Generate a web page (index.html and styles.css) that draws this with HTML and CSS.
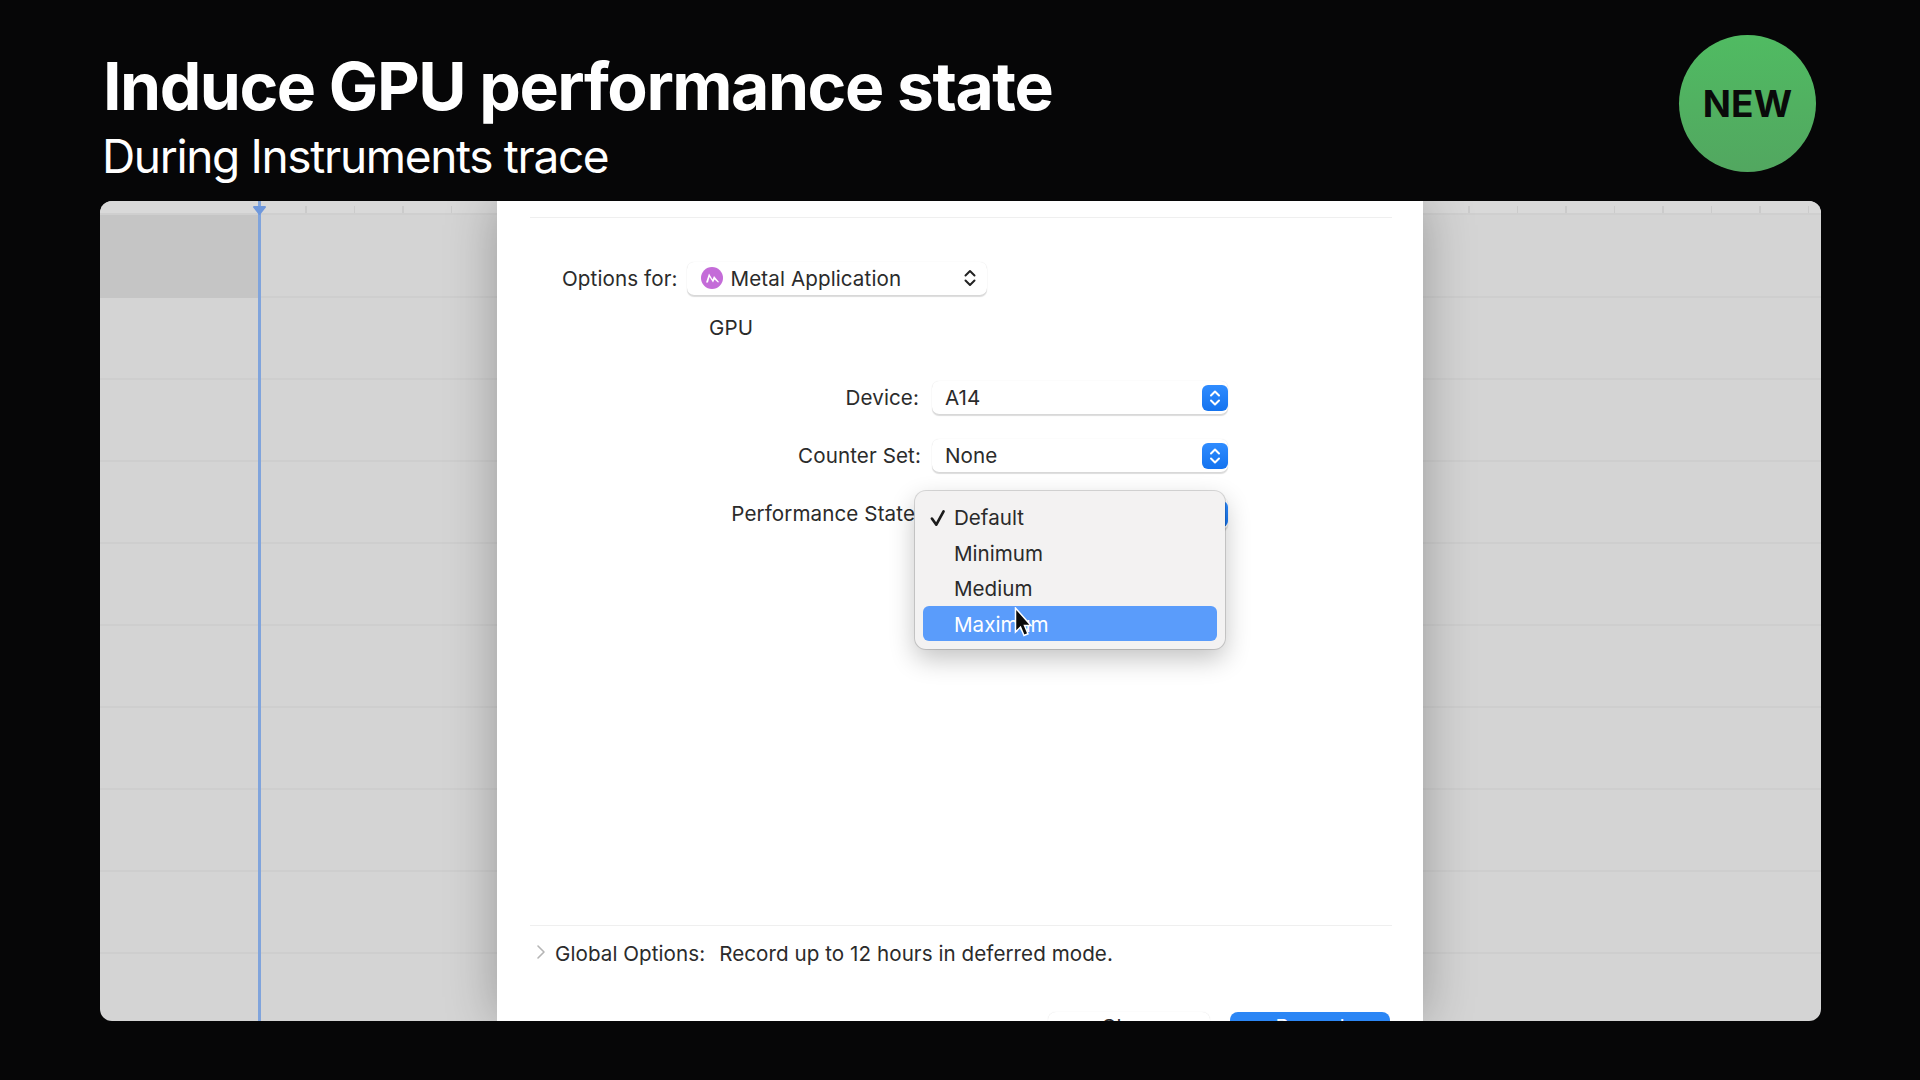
FILE: index.html
```html
<!DOCTYPE html>
<html lang="en">
<head>
<meta charset="utf-8">
<title>Induce GPU performance state</title>
<link rel="stylesheet" href="styles.css">
</head>
<body>
<main class="slide">
  <header class="head">
    <div class="titles">
      <h1 class="title">Induce GPU performance state</h1>
      <p class="subtitle">During Instruments trace</p>
    </div>
    <div class="badge">NEW</div>
  </header>

  <section class="panel">
    <div class="pane pane-left">
      <div class="ruler"></div>
      <div class="row row-head"><div class="row-label"></div></div>
      <div class="row"></div><div class="row"></div><div class="row"></div><div class="row"></div>
      <div class="row"></div><div class="row"></div><div class="row"></div><div class="row"></div>
      <div class="playhead">
        <svg class="playhead-cap" width="13" height="9" viewBox="0 0 13 9"><path d="M1 0h11a1 1 0 0 1 .8 1.600L7.300 8.400a1 1 0 0 1-1.600 0L.2 1.600A1 1 0 0 1 1 0z" fill="#6f98dc"/></svg>
      </div>
    </div>

    <div class="dialog">
      <hr class="rule rule-top">
      <div class="options">
        <span class="options-label">Options for:</span>
        <div class="select select-template">
          <svg class="metal" width="22" height="22" viewBox="0 0 22 22"><circle cx="11" cy="11" r="11" fill="#c46cd8"/><path d="M5 15.500 8 6.500l3.500 6 1.500-3.500 5 6-1 .5-3.500-3-1.500 3-3.500-5.500-1.500 5.500z" fill="#fff"/></svg>
          <span class="select-text">Metal Application</span>
          <svg class="chev" width="14" height="20" viewBox="0 0 14 20"><path d="M2.500 7.500 7 3l4.500 4.500M2.500 12.500 7 17l4.500-4.500" fill="none" stroke="#222" stroke-width="2" stroke-linecap="round" stroke-linejoin="round"/></svg>
        </div>
      </div>
      <div class="section-name">GPU</div>

      <div class="fields">
        <div class="field">
          <span class="field-label">Device:</span>
          <div class="select select-field">
            <span class="select-text">A14</span>
            <span class="stepper"><svg width="14" height="20" viewBox="0 0 14 20"><path d="M3 7.500 7 3.500l4 4M3 12.500l4 4 4-4" fill="none" stroke="#fff" stroke-width="2" stroke-linecap="round" stroke-linejoin="round"/></svg></span>
          </div>
        </div>
        <div class="field field-counter">
          <span class="field-label">Counter Set:</span>
          <div class="select select-field">
            <span class="select-text">None</span>
            <span class="stepper"><svg width="14" height="20" viewBox="0 0 14 20"><path d="M3 7.500 7 3.500l4 4M3 12.500l4 4 4-4" fill="none" stroke="#fff" stroke-width="2" stroke-linecap="round" stroke-linejoin="round"/></svg></span>
          </div>
        </div>
        <div class="field field-state">
          <span class="field-label">Performance State</span>
          <div class="select select-field">
            <span class="select-text"></span>
            <span class="stepper"></span>
          </div>
          <ul class="menu">
            <li class="menu-item"><svg class="check" width="20" height="20" viewBox="0 0 18 18"><path d="M3.500 9.500 7.500 15 14 3" fill="none" stroke="#1c1c1c" stroke-width="2.400" stroke-linecap="round" stroke-linejoin="round"/></svg>Default</li>
            <li class="menu-item">Minimum</li>
            <li class="menu-item">Medium</li>
            <li class="menu-item is-active">Maximum</li>
          </ul>
          <svg class="cursor" width="20" height="34" viewBox="0 0 20 34"><path d="M1.500 1v24l5-5 3.500 8.500 4-1.700-3.500-8.300h6.500z" fill="#0b0b0b" stroke="#fff" stroke-width="1.500"/></svg>
        </div>
      </div>

      <div class="spacer"></div>
      <hr class="rule">
      <div class="global">
        <svg class="disclosure" width="10" height="16" viewBox="0 0 10 16"><path d="M2 2l6 6-6 6" fill="none" stroke="#b5b5b5" stroke-width="1.600" stroke-linecap="round" stroke-linejoin="round"/></svg>
        <span>Global Options:</span>
        <span class="global-value">Record up to 12 hours in deferred mode.</span>
      </div>
      <div class="actions">
        <button class="btn btn-plain">Close</button>
        <button class="btn btn-primary">Record</button>
      </div>
    </div>

    <div class="pane pane-right">
      <div class="ruler"></div>
      <div class="row row-head"></div><div class="row"></div><div class="row"></div><div class="row"></div>
      <div class="row"></div><div class="row"></div><div class="row"></div><div class="row"></div><div class="row"></div>
    </div>
  </section>
</main>
</body>
</html>
```
FILE: styles.css
```css
* { box-sizing: border-box; }
html, body { margin: 0; height: 100%; background: #060607; }
body { font-family: Inter, "Liberation Sans", sans-serif; overflow: hidden; }

.slide { width: 1920px; height: 1080px; padding: 0 99px 59px 100px; display: flex; flex-direction: column; }

.head { height: 201px; flex: none; display: flex; justify-content: space-between; position: relative; }
.titles { padding: 49px 0 0 3px; color: #fff; }
.title { margin: 0; font-size: 66px; line-height: 74px; font-weight: 700; letter-spacing: -1.460px; }
.subtitle { margin: 7px 0 0 -1px; font-size: 46px; line-height: 52px; font-weight: 400; letter-spacing: -1.350px; }
.badge {
  width: 137px; height: 137px; margin: 35px 5px 0 0; border-radius: 50%;
  background: linear-gradient(#50bb62, #52a760);
  color: #0a0a0a; font-size: 37px; font-weight: 700; letter-spacing: .2px;
  display: flex; align-items: center; justify-content: center;
}

.panel {
  flex: 1; min-height: 0; display: grid; grid-template-columns: 397px 926px 1fr;
  border-radius: 12px; overflow: hidden; background: #d4d4d4;
}

.pane { position: relative; display: flex; flex-direction: column; min-width: 0; overflow: hidden; }
.ruler {
  height: 14px; flex: none; border-bottom: 2px solid #cfcfcf; background-color: #d9d9d9;
  background-image: repeating-linear-gradient(90deg, transparent 0 47px, #cbcbcb 47px 48.500px);
  background-repeat: no-repeat;
}
.pane-left .ruler { background-size: 239px 7px; background-position: right bottom; }
.pane-right .ruler { background-size: calc(100% + 2px) 7px; background-position: -2px bottom; }
.row { height: 82px; flex: none; border-bottom: 2px solid #cecece; }
.row-head { height: 83px; }
.row-label { width: 158px; height: 83px; background: #c5c5c5; }
.playhead { position: absolute; left: 158px; top: 0; bottom: 0; width: 3px; background: #80a4dc; }
.playhead-cap { position: absolute; left: -5px; top: 5px; }

.dialog {
  position: relative; z-index: 1; background: #fff; color: #2b2b2b;
  box-shadow: 0 0 48px rgba(0, 0, 0, .28);
  padding: 16px 31px 0 33px; display: flex; flex-direction: column;
  font-size: 20.600px; letter-spacing: .1px; overflow: hidden;
}
.rule { margin: 0; border: 0; height: 1px; background: #efefef; flex: none; }

.select {
  background: #fff; border-radius: 7px; display: flex; align-items: center;
  box-shadow: 0 0 1px rgba(0, 0, 0, .12), 0 1.500px 1px rgba(0, 0, 0, .14);
  color: #2b2b2b;
}
.options { margin-top: 44px; display: flex; align-items: center; height: 33px; padding-left: 32px; gap: 9px; }
.select-template { width: 300px; height: 33px; padding: 0 10px 0 14px; gap: 8px; margin-top: -1px; }
.select-text { flex: 1; white-space: nowrap; }
.section-name { margin: 16px 0 0 179px; height: 34px; line-height: 34px; }

.fields { margin-top: 36px; display: flex; flex-direction: column; gap: 25px; }
.field { position: relative; height: 33px; display: flex; align-items: center; justify-content: flex-end; padding-right: 164px; gap: 13px; }
.field-label { white-space: nowrap; }
.field-counter .field-label { margin-right: -2px; }
.select-field { width: 296px; height: 33px; padding: 0 0 0 13px; }
.stepper {
  width: 26px; height: 26px; border-radius: 6px; background: linear-gradient(#2f8cff, #1473ef);
  display: flex; align-items: center; justify-content: center; flex: none;
}
.field-state .field-label { position: relative; right: 4px; }

.menu {
  position: absolute; left: 385px; top: -6px; width: 310px; height: 158px; margin: 0; padding: 8px;
  list-style: none; background: #f3f2f2; border-radius: 11px;
  box-shadow: 0 0 0 1px rgba(0, 0, 0, .14), 0 10px 26px rgba(0, 0, 0, .24);
  display: flex; flex-direction: column;
  letter-spacing: 0;
}
.menu-item { height: 35.500px; flex: none; padding: 2px 0 0 31px; display: flex; align-items: center; position: relative; color: #2a2a2a; border-radius: 6px; }
.menu-item.is-active { background: #5a9cfb; color: #fff; }
.check { position: absolute; left: 5px; top: 9px; }
.cursor { position: absolute; left: 484px; top: 110px; z-index: 2; }

.spacer { flex: 1; }
.global { height: 54px; display: flex; align-items: center; gap: 14px; flex: none; padding-left: 6px; letter-spacing: .06px; }
.disclosure { margin-right: -5px; margin-top: -2px; }
.actions { height: 41px; flex: none; display: flex; justify-content: flex-end; gap: 20px; margin-right: 2px; padding-top: 32px; overflow: visible; }
.btn { font: inherit; height: 36px; padding: 0 0 8px; border: 0; border-radius: 8px; flex: none; }
.btn-plain { width: 162px; background: #fff; color: #2b2b2b; box-shadow: 0 0 1px rgba(0, 0, 0, .15); }
.btn-primary { width: 160px; background: #2b86f5; color: #fff; }
```
